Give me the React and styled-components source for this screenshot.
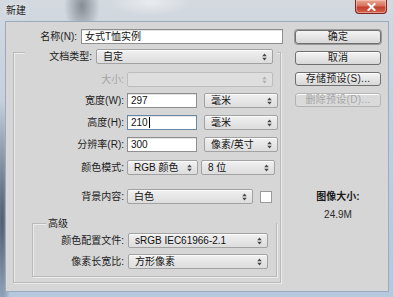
import React from "react";
import styled, { createGlobalStyle, css } from "styled-components";

const GlobalStyle = createGlobalStyle`
  html, body {
    margin: 0;
    padding: 0;
    background: #c4cfdb;
  }
  body {
    font-family: "Liberation Sans", "Noto Sans CJK SC", sans-serif;
    font-size: 10px;
    color: #1c1c1c;
  }
`;

const PANEL = "#d6d6d6";

const Window = styled.div`
  width: 393px;
  height: 297px;
  box-sizing: border-box;
  padding: 0 5px 6px 6px;
  display: flex;
  flex-direction: column;
  background:
    radial-gradient(ellipse 18px 30px at 82px 6px, rgba(70, 78, 88, 0.55), transparent),
    radial-gradient(ellipse 40px 14px at 150px 2px, rgba(255, 255, 255, 0.5), transparent),
    radial-gradient(ellipse 10px 120px at 2px 220px, rgba(40, 52, 70, 0.75), transparent),
    linear-gradient(180deg, #d3d9df 0%, #c3cfdc 40%, #b5c8de 100%);
`;

const TitleBar = styled.div`
  height: 22px;
  display: flex;
  align-items: flex-start;
  justify-content: space-between;
`;

const Title = styled.span`
  margin-top: 4px;
  font-family: "Noto Sans CJK SC", sans-serif;
  font-size: 10px;
  line-height: 12px;
  color: #202020;
  text-shadow: 0 0 6px rgba(255, 255, 255, 0.9);
`;

const CloseButton = styled.div`
  width: 32px;
  height: 14px;
  margin-right: 1px;
  box-sizing: border-box;
  border: 1px solid #7a2a22;
  border-top: none;
  border-radius: 0 0 4px 4px;
  background: linear-gradient(180deg, #e9a894 0%, #d9715d 45%, #c2402e 55%, #d7624a 100%);
  box-shadow: inset 0 0 0 1px rgba(255, 220, 210, 0.45);
  display: flex;
  align-items: center;
  justify-content: center;
`;

const Client = styled.div`
  flex: 1;
  background: ${PANEL};
  box-shadow: 0 0 0 1px #9aabbd;
  display: grid;
  grid-template-columns: 282px 100px;
`;

const LeftPane = styled.div`
  padding-top: 7px;
  display: flex;
  flex-direction: column;
`;

const Row = styled.div`
  display: flex;
  align-items: center;
  gap: ${(p) => p.$gap ?? 4}px;
  margin-top: ${(p) => p.$top ?? 0}px;
  margin-left: ${(p) => p.$left ?? 0}px;
`;

const Label = styled.span`
  width: ${(p) => p.$w}px;
  flex: none;
  text-align: right;
  white-space: nowrap;
  line-height: 12px;
  color: ${(p) => (p.$disabled ? "#a4a4a4" : "#1c1c1c")};
`;

const TextField = styled.div`
  width: ${(p) => p.$w}px;
  height: 15px;
  box-sizing: border-box;
  flex: none;
  background: #fff;
  border: 1px solid ${(p) => (p.$focus ? "#6a87a8" : "#8e8e8e")};
  box-shadow: inset 0 1px 0 #e4e4e4;
  padding: 0 3px;
  display: flex;
  align-items: center;
  font-size: 10px;
  line-height: 12px;
  color: #111;
`;

const Caret = styled.span`
  width: 1px;
  height: 11px;
  background: #000;
  margin-left: 1px;
`;

const SelectBox = styled.div`
  width: ${(p) => p.$w}px;
  height: 15px;
  box-sizing: border-box;
  flex: none;
  border: 1px solid #a2a2a2;
  border-radius: 2px;
  background: linear-gradient(180deg, #f1f1f1 0%, #e6e6e6 50%, #dddddd 100%);
  box-shadow: inset 0 1px 0 #fbfbfb;
  padding: 0 5px 0 6px;
  display: flex;
  align-items: center;
  justify-content: space-between;
  line-height: 12px;
  color: #111;
  ${(p) =>
    p.$disabled &&
    css`
      background: #dedede;
      border-color: #bdbdbd;
      box-shadow: none;
    `}
`;

const Group = styled.div`
  box-sizing: border-box;
  width: ${(p) => p.$w}px;
  margin-top: ${(p) => p.$top}px;
  margin-left: ${(p) => p.$left}px;
  padding-bottom: ${(p) => p.$bottom}px;
  border: 1px solid #b9b9b9;
  box-shadow: inset 1px 1px 0 #ececec, 1px 1px 0 #ececec;
`;

const GroupHeader = styled.div`
  display: flex;
  align-items: center;
  gap: 4px;
  background: ${PANEL};
  margin-top: ${(p) => p.$top}px;
  margin-left: ${(p) => p.$left}px;
  padding: 0 ${(p) => p.$pad ?? 0}px;
  width: ${(p) => (p.$w ? `${p.$w}px` : "auto")};
  align-self: flex-start;
  line-height: 12px;
`;

const GroupBody = styled.div`
  display: flex;
  flex-direction: column;
`;

const Swatch = styled.div`
  width: 12px;
  height: 12px;
  box-sizing: border-box;
  background: #fff;
  border: 1px solid #9a9a9a;
`;

const RightPane = styled.div`
  padding: 8px 0 0 7px;
  display: flex;
  flex-direction: column;
  gap: 7px;
`;

const Button = styled.div`
  width: 86px;
  height: 14px;
  box-sizing: border-box;
  border: 1px solid ${(p) => (p.$disabled ? "#b4b4b4" : "#6f6f6f")};
  border-radius: 3px;
  background: ${(p) =>
    p.$disabled
      ? "#dadada"
      : "linear-gradient(180deg, #f4f4f4 0%, #e6e6e6 50%, #d8d8d8 100%)"};
  box-shadow: ${(p) => (p.$default ? "0 0 0 1px #9a9a9a" : "inset 0 1px 0 #fff")};
  display: flex;
  align-items: center;
  justify-content: center;
  line-height: 12px;
  color: ${(p) => (p.$disabled ? "#a6a6a6" : "#1a1a1a")};
  letter-spacing: 0.3px;
`;

const SizeInfo = styled.div`
  margin-top: 77px;
  margin-left: -7px;
  display: flex;
  flex-direction: column;
  align-items: center;
  gap: 6px;
  line-height: 12px;
`;

const SizeTitle = styled.span`
  font-weight: bold;
  color: #1a1a1a;
`;

const SizeValue = styled.span`
  color: #2c2c2c;
`;

const Arrows = ({ disabled }) => (
  <svg width="5" height="8" viewBox="0 0 5 8">
    <path d="M2.5 0.5 L4.8 3.2 H0.2 Z M2.5 7.5 L4.8 4.8 H0.2 Z" fill={disabled ? "#b0b0b0" : "#4a4a4a"} />
  </svg>
);

const Select = ({ w, value, disabled }) => (
  <SelectBox $w={w} $disabled={disabled}>
    <span>{value}</span>
    <Arrows disabled={disabled} />
  </SelectBox>
);

const LABEL = 110;

export default function App() {
  return (
    <>
      <GlobalStyle />
      <Window>
        <TitleBar>
          <Title>新建</Title>
          <CloseButton>
            <svg width="9" height="8" viewBox="0 0 9 8">
              <path d="M1.5 1 L7.5 7 M7.5 1 L1.5 7" stroke="#fff" strokeWidth="2" strokeLinecap="square" />
            </svg>
          </CloseButton>
        </TitleBar>
        <Client>
          <LeftPane>
            <Row>
              <Label $w={71}>名称(N):</Label>
              <TextField $w={202}>女式T恤实例</TextField>
            </Row>

            <Group $w={268} $top={8} $left={7} $bottom={5}>
              <GroupHeader $top={-4} $left={11} $w={252}>
                <Label $w={67}>文档类型:</Label>
                <Select w={177} value="自定" />
              </GroupHeader>

              <GroupBody>
                <Row $top={8} $gap={3}>
                  <Label $w={LABEL} $disabled>大小:</Label>
                  <Select w={146} value="" disabled />
                </Row>
                <Row $top={6} $gap={3}>
                  <Label $w={LABEL}>宽度(W):</Label>
                  <TextField $w={70}>297</TextField>
                  <span style={{ width: 1 }} />
                  <Select w={74} value="毫米" />
                </Row>
                <Row $top={7} $gap={3}>
                  <Label $w={LABEL}>高度(H):</Label>
                  <TextField $w={70} $focus>
                    210
                    <Caret />
                  </TextField>
                  <span style={{ width: 1 }} />
                  <Select w={74} value="毫米" />
                </Row>
                <Row $top={7} $gap={3}>
                  <Label $w={LABEL}>分辨率(R):</Label>
                  <TextField $w={70}>300</TextField>
                  <span style={{ width: 1 }} />
                  <Select w={74} value="像素/英寸" />
                </Row>
                <Row $top={8} $gap={3}>
                  <Label $w={LABEL}>颜色模式:</Label>
                  <Select w={71} value="RGB 颜色" />
                  <Select w={74} value="8 位" />
                </Row>
                <Row $top={14} $gap={3}>
                  <Label $w={LABEL}>背景内容:</Label>
                  <Select w={126} value="白色" />
                  <span style={{ width: 1 }} />
                  <Swatch />
                </Row>

                <Group $w={245} $top={19} $left={18} $bottom={7}>
                  <GroupHeader $top={-6} $left={13} $pad={2}>
                    <span>高级</span>
                  </GroupHeader>
                  <Row $top={3}>
                    <Label $w={91}>颜色配置文件:</Label>
                    <Select w={140} value="sRGB IEC61966-2.1" />
                  </Row>
                  <Row $top={6}>
                    <Label $w={91}>像素长宽比:</Label>
                    <Select w={140} value="方形像素" />
                  </Row>
                </Group>
              </GroupBody>
            </Group>
          </LeftPane>

          <RightPane>
            <Button $default>确定</Button>
            <Button>取消</Button>
            <Button>存储预设(S)...</Button>
            <Button $disabled>删除预设(D)...</Button>
            <SizeInfo>
              <SizeTitle>图像大小:</SizeTitle>
              <SizeValue>24.9M</SizeValue>
            </SizeInfo>
          </RightPane>
        </Client>
      </Window>
    </>
  );
}
